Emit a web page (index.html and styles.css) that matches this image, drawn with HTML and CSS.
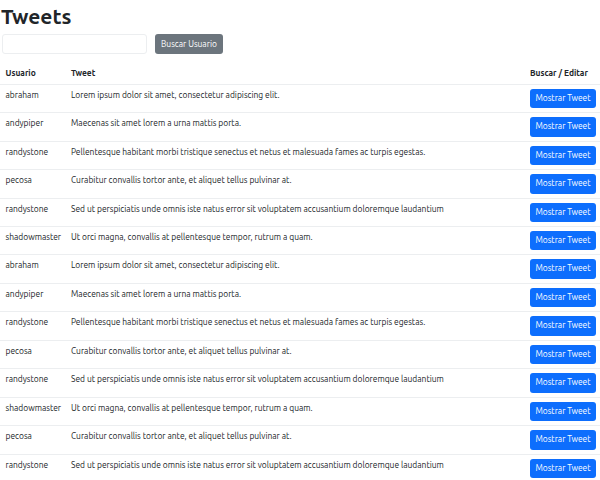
FILE: index.html
```html
<!DOCTYPE html>
<html lang="es">
<head>
<meta charset="utf-8">
<title>Tweets</title>
<link rel="stylesheet" href="styles.css">
</head>
<body>
<div class="page">
  <h1 class="title">Tweets</h1>
  <form class="search">
    <input class="search-input" type="text">
    <button class="btn btn-secondary" type="button">Buscar Usuario</button>
  </form>
  <table class="tweets">
    <colgroup><col class="c-user"><col class="c-tweet"><col class="c-action"></colgroup>
    <thead>
      <tr><th>Usuario</th><th>Tweet</th><th>Buscar / Editar</th></tr>
    </thead>
    <tbody>
      <tr><td>abraham</td><td>Lorem ipsum dolor sit amet, consectetur adipiscing elit.</td><td><button class="btn btn-primary" type="button">Mostrar Tweet</button></td></tr>
      <tr><td>andypiper</td><td>Maecenas sit amet lorem a urna mattis porta.</td><td><button class="btn btn-primary" type="button">Mostrar Tweet</button></td></tr>
      <tr><td>randystone</td><td>Pellentesque habitant morbi tristique senectus et netus et malesuada fames ac turpis egestas.</td><td><button class="btn btn-primary" type="button">Mostrar Tweet</button></td></tr>
      <tr><td>pecosa</td><td>Curabitur convallis tortor ante, et aliquet tellus pulvinar at.</td><td><button class="btn btn-primary" type="button">Mostrar Tweet</button></td></tr>
      <tr><td>randystone</td><td>Sed ut perspiciatis unde omnis iste natus error sit voluptatem accusantium doloremque laudantium</td><td><button class="btn btn-primary" type="button">Mostrar Tweet</button></td></tr>
      <tr><td>shadowmaster</td><td>Ut orci magna, convallis at pellentesque tempor, rutrum a quam.</td><td><button class="btn btn-primary" type="button">Mostrar Tweet</button></td></tr>
      <tr><td>abraham</td><td>Lorem ipsum dolor sit amet, consectetur adipiscing elit.</td><td><button class="btn btn-primary" type="button">Mostrar Tweet</button></td></tr>
      <tr><td>andypiper</td><td>Maecenas sit amet lorem a urna mattis porta.</td><td><button class="btn btn-primary" type="button">Mostrar Tweet</button></td></tr>
      <tr><td>randystone</td><td>Pellentesque habitant morbi tristique senectus et netus et malesuada fames ac turpis egestas.</td><td><button class="btn btn-primary" type="button">Mostrar Tweet</button></td></tr>
      <tr><td>pecosa</td><td>Curabitur convallis tortor ante, et aliquet tellus pulvinar at.</td><td><button class="btn btn-primary" type="button">Mostrar Tweet</button></td></tr>
      <tr><td>randystone</td><td>Sed ut perspiciatis unde omnis iste natus error sit voluptatem accusantium doloremque laudantium</td><td><button class="btn btn-primary" type="button">Mostrar Tweet</button></td></tr>
      <tr><td>shadowmaster</td><td>Ut orci magna, convallis at pellentesque tempor, rutrum a quam.</td><td><button class="btn btn-primary" type="button">Mostrar Tweet</button></td></tr>
      <tr><td>pecosa</td><td>Curabitur convallis tortor ante, et aliquet tellus pulvinar at.</td><td><button class="btn btn-primary" type="button">Mostrar Tweet</button></td></tr>
      <tr><td>randystone</td><td>Sed ut perspiciatis unde omnis iste natus error sit voluptatem accusantium doloremque laudantium</td><td><button class="btn btn-primary" type="button">Mostrar Tweet</button></td></tr>
    </tbody>
  </table>
</div>
</body>
</html>
```

FILE: styles.css
```css
* { box-sizing: border-box; }

html, body {
  margin: 0;
  padding: 0;
  background: #ffffff;
}

body {
  font-family: "Ubuntu", "Open Sans", "Noto Sans", sans-serif;
  font-size: 8.44px;
  line-height: 1.5;
  color: #212529;
  overflow: hidden;
}

.page {
  width: 600px;
}

.title {
  margin: 4px 0 5px 1px;
  font-size: 21px;
  line-height: 1.2;
  font-weight: 600;
  color: #212529;
}

.search {
  display: flex;
  align-items: center;
  gap: 8px;
  padding-left: 2px;
  margin-bottom: 8.5px;
}

.search-input {
  width: 145px;
  height: 20px;
  margin: 0;
  padding: 0 6px;
  border: 1px solid #eceef0;
  border-radius: 3px;
  font: inherit;
  background: #fff;
}

.btn {
  display: inline-block;
  height: 20px;
  margin: 0;
  padding: 0 6px;
  border: 0;
  border-radius: 3px;
  font-family: inherit;
  font-size: 8.44px;
  line-height: 20px;
  color: #ffffff;
  white-space: nowrap;
  cursor: pointer;
}

.btn-secondary { background: #6c757d; }

.btn-primary {
  display: block;
  background: #0d6efd;
  width: 66px;
  height: 19.46px;
  line-height: 19.46px;
  padding: 0;
  text-align: center;
}

.tweets {
  width: 600px;
  table-layout: fixed;
  border-collapse: collapse;
}

.c-user { width: 67px; }
.c-action { width: 74px; }

.tweets th,
.tweets td {
  padding: 4px;
  text-align: left;
  vertical-align: top;
  border-bottom: 1px solid #eceef0;
  white-space: nowrap;
}

.tweets th:first-child,
.tweets td:first-child {
  padding-left: 5.5px;
}

.tweets th {
  font-weight: 700;
  padding-top: 4.3px;
  padding-bottom: 4.1px;
}

.tweets td {
  padding-top: 4px;
  padding-bottom: 4px;
}
```
